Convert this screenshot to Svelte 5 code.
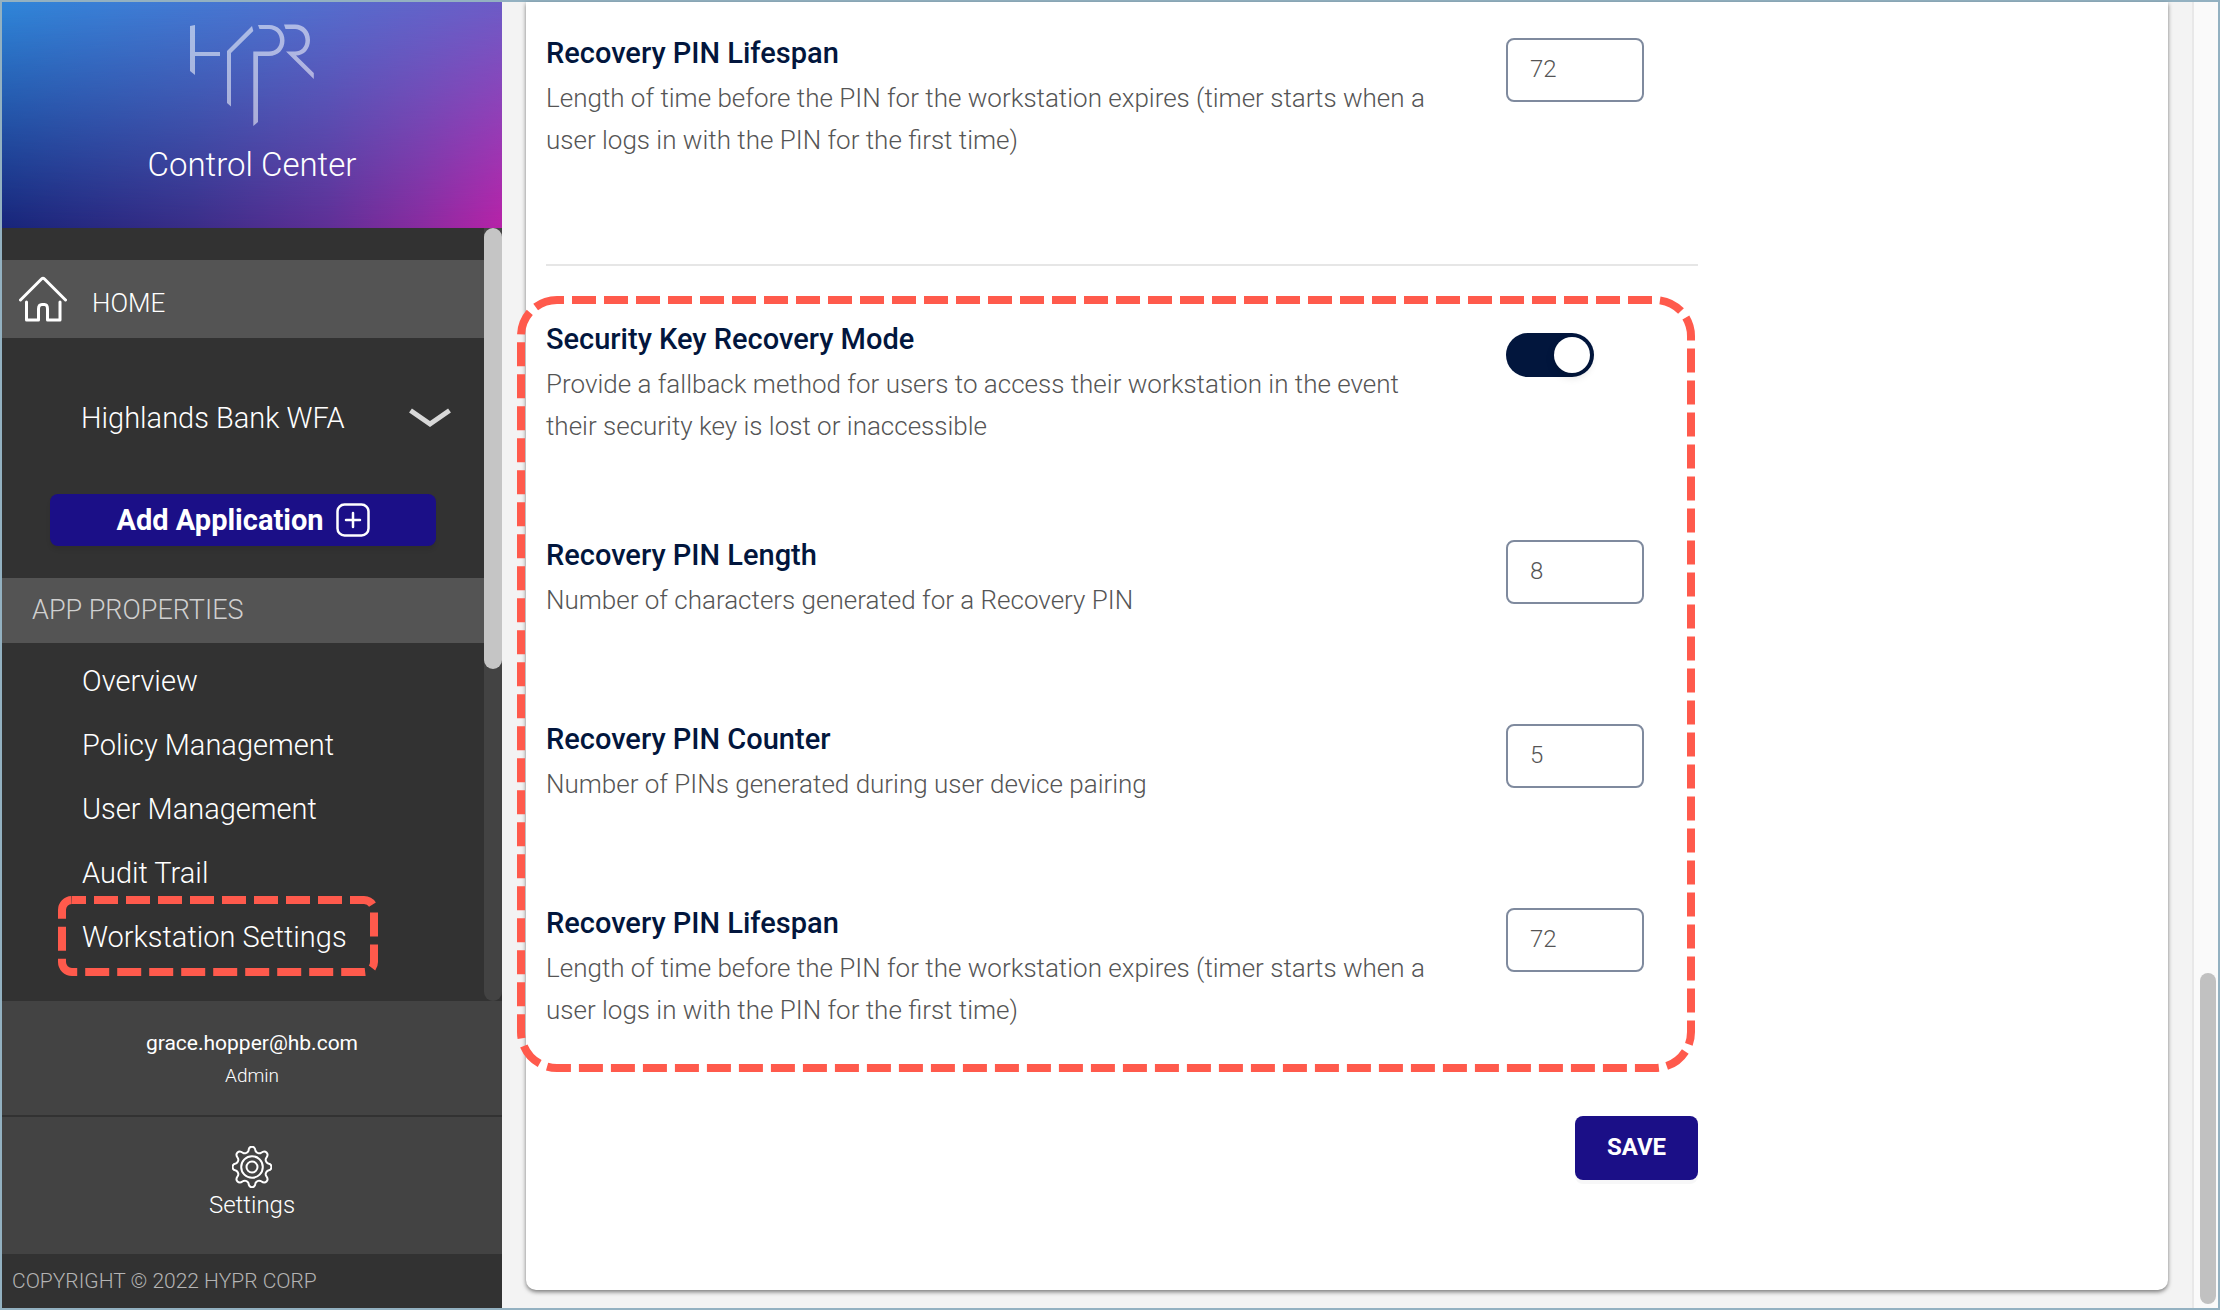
<script>
  const navItems = ['Overview', 'Policy Management', 'User Management', 'Audit Trail', 'Workstation Settings'];
  const recoveryFields = [
    { id: 'pin-length', title: 'Recovery PIN Length', text: 'Number of characters generated for a Recovery PIN', value: '8' },
    { id: 'pin-counter', title: 'Recovery PIN Counter', text: 'Number of PINs generated during user device pairing', value: '5' },
    {
      id: 'pin-lifespan',
      title: 'Recovery PIN Lifespan',
      text: 'Length of time before the PIN for the workstation expires (timer starts when a user logs in with the PIN for the first time)',
      value: '72'
    }
  ];
  const lifespan = recoveryFields[2];
</script>

{#snippet field(item, id)}
  <div class="row">
    <div class="copy">
      <label class="title" for={id}>{item.title}</label>
      <p>{item.text}</p>
    </div>
    <input class="number" {id} type="text" value={item.value} />
  </div>
{/snippet}

<div class="app">
  <aside class="sidebar">
    <header class="brand">
      <svg class="logo" viewBox="190 24 124 102" role="img" aria-label="HYPR">
        <g fill="#fff" opacity="0.54">
          <path d="M190 26L195 25V52H220V56H195V75L190 71Z" />
          <path d="M227 51L252 26L253.300 31L231 53V106.500L227 103Z" />
          <path d="M258 25H269C278 25 284.500 31.500 284.500 40.500S278 56 269 56H258V122L253.300 126V51.500H269C275.500 51.500 280 47 280 40.500S275.500 29 269 29H259.500Z" />
          <path d="M284 24.500H295C304 24.500 310 31 310 40S304 55.500 296 55.500L313.800 73V79L286 51.500H295C301 51.500 305.500 47 305.500 40.500S301 29 295 29H285.500Z" />
        </g>
      </svg>
      <h1>Control Center</h1>
    </header>

    <div class="navwrap">
      <nav class="nav">
        <a class="home" href="#home">
          <svg viewBox="0 0 48 46" width="48" height="46" fill="none" stroke="#fff" stroke-width="3" stroke-linecap="round" stroke-linejoin="round">
            <path d="M1.500 24L22.500 3Q24 1.500 25.500 3L46.500 24" />
            <path d="M7.500 26V44H19.500V33Q19.500 28.500 23 28.500H25.500Q28.500 28.500 28.500 33V44H41V26" />
          </svg>
          <span>HOME</span>
        </a>
        <button class="picker" type="button">
          <span>Highlands Bank WFA</span>
          <svg viewBox="0 0 42 20" width="42" height="20" fill="none" stroke="#d8d8d8" stroke-width="5">
            <path d="M1.500 2.500L21 16L40.500 2.500" />
          </svg>
        </button>
        <button class="add" type="button">
          <span>Add Application</span>
          <svg viewBox="0 0 34 34" width="34" height="34" fill="none" stroke="#fff" stroke-linecap="round">
            <rect x="1.500" y="1.500" width="31" height="31" rx="7" stroke-width="2.500" />
            <path d="M17 10V24M10 17H24" stroke-width="2.500" />
          </svg>
        </button>
        <h2>APP PROPERTIES</h2>
        <ul>
          {#each navItems as item, i}
            <li>
              <a href="#{item.toLowerCase().replaceAll(' ', '-')}">{item}</a>
              {#if i === navItems.length - 1}
                <svg class="callout small" aria-hidden="true"><rect x="4" y="4" rx="10" /></svg>
              {/if}
            </li>
          {/each}
        </ul>
      </nav>
      <div class="track"><div class="thumb"></div></div>
    </div>

    <div class="user">
      <span class="email">grace.hopper@hb.com</span>
      <span class="role">Admin</span>
    </div>
    <a class="settings" href="#settings">
      <svg viewBox="-20 -21 40 42" width="40" height="42" fill="none" stroke="#fff" stroke-width="2">
        <circle r="5.500" />
        <circle r="10.800" />
        <path d="M-3.500 -16.200C-3 -21.600 3 -21.600 3.500 -16.200C4.500 -13.800 7.500 -13 9.200 -14.300C13.400 -17.500 17.500 -13.400 14.300 -9.200C13 -7.500 13.800 -4.500 16.200 -3.500C20.600 -3 20.600 3 16.200 3.500C13.800 4.500 13 7.500 14.300 9.200C17.500 13.400 13.400 17.500 9.200 14.300C7.500 13 4.500 13.800 3.500 16.200C3 21.600 -3 21.600 -3.500 16.200C-4.500 13.800 -7.500 13 -9.200 14.300C-13.400 17.500 -17.500 13.400 -14.300 9.200C-13 7.500 -13.800 4.500 -16.200 3.500C-20.600 3 -20.600 -3 -16.200 -3.500C-13.800 -4.500 -13 -7.500 -14.300 -9.200C-17.500 -13.400 -13.400 -17.500 -9.200 -14.300C-7.500 -13 -4.500 -13.800 -3.500 -16.200Z" />
      </svg>
      <span>Settings</span>
    </a>
    <footer>COPYRIGHT © 2022 HYPR CORP</footer>
  </aside>

  <main>
    <section class="card">
      <form class="form" onsubmit={(e) => e.preventDefault()}>
        {@render field(lifespan, 'device-pin-lifespan')}
        <hr />
        <div class="group">
          <div class="row mode">
            <div class="copy">
              <label class="title" for="recovery-mode">Security Key Recovery Mode</label>
              <p>Provide a fallback method for users to access their workstation in the event their security key is lost or inaccessible</p>
            </div>
            <input class="toggle" id="recovery-mode" type="checkbox" role="switch" checked />
          </div>
          {#each recoveryFields as item}
            {@render field(item, item.id)}
          {/each}
          <svg class="callout large" aria-hidden="true"><rect x="4" y="4" rx="36" /></svg>
        </div>
        <button class="save" type="submit">SAVE</button>
      </form>
    </section>
  </main>
  <div class="gutter"><div class="bar"></div></div>
</div>

<style>
  :global(body) {
    margin: 0;
  }
  .app {
    box-sizing: border-box;
    display: flex;
    min-height: 100vh;
    border: 2px solid #93b1c1;
    background: #f3f3f3;
    font-family: Roboto, 'Liberation Sans', sans-serif;
    font-weight: 300;
  }
  .app :global(*) {
    box-sizing: border-box;
  }
  a {
    color: inherit;
    text-decoration: none;
  }
  button,
  input {
    font-family: inherit;
    margin: 0;
  }

  .sidebar {
    flex: 0 0 500px;
    display: flex;
    flex-direction: column;
    background: #323232;
    color: #fff;
  }
  .brand {
    position: relative;
    isolation: isolate;
    display: flex;
    flex-direction: column;
    align-items: center;
    height: 226px;
    padding-top: 22px;
    background: linear-gradient(to right, #18257a 0%, #3a2d88 38%, #5f2f96 65%, #8a2ba0 84%, #b822a8 100%);
  }
  /* Brighter top colours that fade into the darker row below */
  .brand::before {
    content: '';
    position: absolute;
    inset: 0;
    z-index: -1;
    background: linear-gradient(to right, #2f86d9 0%, #4a74d0 50%, #6c5cc6 100%);
    mask-image: linear-gradient(to bottom, #000 0%, transparent 100%);
  }
  .logo {
    width: 124px;
    height: 102px;
  }
  h1 {
    margin: 19px 0 0;
    font-size: 33px;
    line-height: 40px;
    font-weight: 300;
  }

  .navwrap {
    flex: 1;
    display: flex;
  }
  .nav {
    flex: 1;
    padding-top: 32px;
    font-size: 29px;
  }
  .home {
    display: flex;
    align-items: center;
    gap: 25px;
    height: 78px;
    padding: 8px 17px 0;
    background: #545454;
    font-size: 26px;
  }
  .home svg {
    margin-bottom: 8px;
  }
  .picker {
    display: flex;
    align-items: center;
    justify-content: space-between;
    width: 100%;
    height: 48px;
    margin: 56px 0 52px;
    padding: 0 33px 0 79px;
    border: 0;
    background: none;
    color: #fff;
    font-size: 29px;
    font-weight: 300;
  }
  .add {
    display: flex;
    align-items: center;
    justify-content: center;
    gap: 12px;
    width: calc(100% - 96px);
    height: 52px;
    margin: 0 48px;
    padding: 0;
    border: 0;
    border-radius: 8px;
    background: #1b0f87;
    color: #fff;
    font-size: 29px;
    font-weight: 700;
    box-shadow: 0 4px 4px rgba(0, 0, 0, 0.08);
  }
  h2 {
    margin: 32px 0 0;
    padding-left: 30px;
    background: #545454;
    color: #d0d0d0;
    font-size: 27px;
    line-height: 65px;
    font-weight: 300;
  }
  ul {
    margin: 0;
    padding: 6px 0 32px;
    list-style: none;
  }
  li {
    position: relative;
    padding-left: 80px;
    line-height: 64px;
  }
  .track {
    width: 18px;
    border-radius: 0 0 9px 9px;
    background: #434343;
  }
  .thumb {
    height: 57%;
    border-radius: 9px;
    background: #c5c5c5;
  }

  .user {
    display: flex;
    flex-direction: column;
    align-items: center;
    height: 116px;
    padding-top: 25px;
    border-bottom: 2px solid #323232;
    background: #434343;
  }
  .email {
    font-size: 21px;
    line-height: 34px;
    font-weight: 400;
  }
  .role {
    font-size: 19px;
    line-height: 32px;
  }
  .settings {
    display: flex;
    flex-direction: column;
    align-items: center;
    height: 137px;
    padding-top: 29px;
    background: #434343;
    font-size: 24px;
    line-height: 34px;
  }
  footer {
    padding: 0 10px;
    color: #b4b4b4;
    font-size: 21px;
    line-height: 54px;
  }

  main {
    flex: 1;
    padding: 0 24px 18px;
  }
  .card {
    height: 100%;
    padding: 32px 20px 0;
    border-radius: 0 0 10px 10px;
    background: #fff;
    box-shadow: 0 2px 4px rgba(0, 0, 0, 0.5);
  }
  .form {
    max-width: 1152px;
  }
  .row {
    display: flex;
    align-items: flex-start;
    min-height: 184px;
  }
  .copy {
    width: 960px;
    padding-right: 60px;
  }
  .title {
    display: block;
    color: #02163d;
    font-size: 29px;
    line-height: 38px;
    font-weight: 500;
  }
  p {
    margin: 5px 0 0;
    color: #555;
    font-size: 26px;
    line-height: 42px;
  }
  .number {
    width: 138px;
    height: 64px;
    margin-top: 4px;
    padding: 0 22px 2px;
    border: 2px solid #7f8a9e;
    border-radius: 8px;
    background: #fff;
    color: #555;
    font-size: 24px;
    font-weight: 300;
  }
  hr {
    height: 2px;
    margin: 46px 0 0;
    border: 0;
    background: #e6e6e6;
  }
  .group {
    position: relative;
    padding-top: 54px;
  }
  .mode {
    min-height: 216px;
  }
  .toggle {
    appearance: none;
    width: 88px;
    height: 44px;
    margin-top: 13px;
    padding: 4px;
    border-radius: 22px;
    background: #02163d;
  }
  .toggle::before {
    content: '';
    display: block;
    width: 36px;
    height: 36px;
    margin-left: auto;
    border-radius: 50%;
    background: #fff;
    box-shadow: 0 4px 8px rgba(0, 0, 0, 0.15);
  }
  .save {
    display: block;
    width: 123px;
    height: 64px;
    margin: 28px 0 0 auto;
    padding: 0 0 2px;
    border: 0;
    border-radius: 8px;
    background: #1b0f87;
    color: #fff;
    font-size: 24px;
    font-weight: 700;
    box-shadow: 0 4px 0 rgba(0, 0, 40, 0.03);
  }

  .callout {
    position: absolute;
    overflow: visible;
    pointer-events: none;
  }
  .callout rect {
    width: calc(100% - 8px);
    height: calc(100% - 8px);
    fill: none;
    stroke: #ff5a4c;
    stroke-width: 8;
    stroke-dasharray: 24 8;
  }
  .small {
    top: -9px;
    left: 56px;
    width: 320px;
    height: 80px;
  }
  .small rect {
    stroke-dashoffset: 10;
  }
  .large {
    top: 30px;
    left: -29px;
    width: calc(100% + 26px);
    height: 776px;
  }
  .large rect {
    stroke-dashoffset: 17;
  }

  .gutter {
    width: 26px;
    padding: 971px 2px 4px 6px;
    border-left: 2px solid #e8e8e8;
    background: #fafafa;
  }
  .bar {
    height: 100%;
    border-radius: 8px;
    background: #c1c1c1;
  }
</style>
